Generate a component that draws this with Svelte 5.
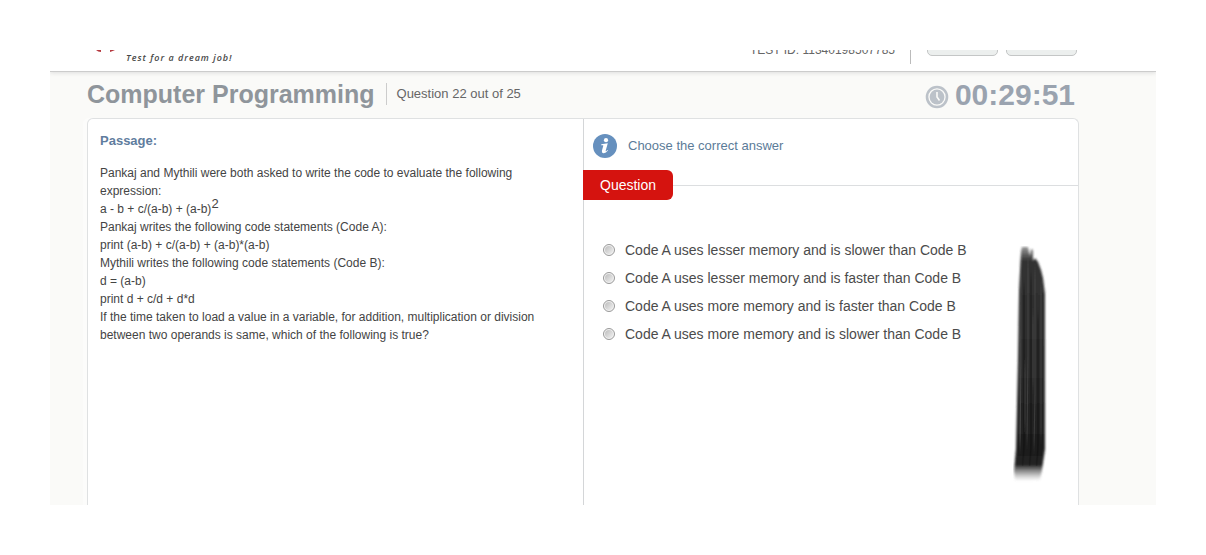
<script>
  const passage = [
    'Pankaj and Mythili were both asked to write the code to evaluate the following expression:',
    { base: 'a - b + c/(a-b) + (a-b)', power: '2' },
    'Pankaj writes the following code statements (Code A):',
    'print (a-b) + c/(a-b) + (a-b)*(a-b)',
    'Mythili writes the following code statements (Code B):',
    'd = (a-b)',
    'print d + c/d + d*d',
    'If the time taken to load a value in a variable, for addition, multiplication or division between two operands is same, which of the following is true?'
  ];
  const options = [
    'Code A uses lesser memory and is slower than Code B',
    'Code A uses lesser memory and is faster than Code B',
    'Code A uses more memory and is faster than Code B',
    'Code A uses more memory and is slower than Code B'
  ];
  let chosen = $state('');
</script>

<div class="page">
  <header>
    <div class="brand">
      <svg class="logo" width="22" height="4" viewBox="0 0 22 4" aria-hidden="true">
        <path d="M2 0H7V2Q4 2 2 0ZM16 0H21Q19 1 16 2Z" fill="#b5393f" />
      </svg>
      <span class="slogan">Test for a dream job!</span>
    </div>
    <div class="account">
      <span class="test-id">TEST ID: 11340198507785</span>
      <span class="rule"></span>
      <button type="button" aria-label="Help"></button>
      <button type="button" aria-label="Finish test"></button>
    </div>
  </header>

  <main>
    <div class="title">
      <h1>Computer Programming</h1>
      <p class="progress">Question 22 out of 25</p>
      <div class="timer">
        <svg width="24" height="24" viewBox="0 0 24 24" aria-hidden="true">
          <circle cx="12" cy="12" r="10" fill="none" stroke="#bcc2c9" stroke-width="2.6" />
          <circle cx="12" cy="12" r="7.4" fill="#bcc2c9" />
          <path d="M12 7V12L14.5 15.5" fill="none" stroke="#fafaf8" stroke-width="1.6" />
        </svg>
        <span>00:29:51</span>
      </div>
    </div>

    <div class="card">
      <section class="passage">
        <h2>Passage:</h2>
        {#each passage as line}
          {#if line.base}
            <p>{line.base}<sup>{line.power}</sup></p>
          {:else}
            <p>{line}</p>
          {/if}
        {/each}
      </section>

      <section class="answers">
        <div class="hint">
          <svg width="24" height="24" viewBox="0 0 24 24" aria-hidden="true">
            <circle cx="12" cy="12" r="12" fill="#6690be" />
            <circle cx="13" cy="6.2" r="2.1" fill="#fff" />
            <path d="M8.3 10.2L14.8 9.3L12.8 16.3Q12.4 17.6 13.2 17.2L14.5 16L15 16.6Q12.8 19.4 10.4 19.2Q8.4 19 8.9 16.8L10.3 11.8Q10.5 11.2 9.8 11.2H8.2Z" fill="#fff" />
          </svg>
          <span>Choose the correct answer</span>
        </div>
        <div class="tab-row"><h2>Question</h2></div>
        <div class="options" role="radiogroup" aria-label="Question">
          {#each options as option}
            <label>
              <input type="radio" name="answer" value={option} bind:group={chosen} />
              <span>{option}</span>
            </label>
          {/each}
        </div>
      </section>

      <svg class="brush" width="36" height="240" viewBox="0 0 36 240" aria-hidden="true">
        <defs>
          <linearGradient id="ink" x1="0" y1="0" x2="0" y2="1">
            <stop offset="0" stop-color="#333" stop-opacity=".5" />
            <stop offset=".06" stop-color="#323232" />
            <stop offset=".5" stop-color="#2b2b2b" />
            <stop offset=".87" stop-color="#1d1d1d" />
            <stop offset=".93" stop-color="#242424" />
            <stop offset="1" stop-color="#777" stop-opacity="0" />
          </linearGradient>
          <filter id="edge"><feGaussianBlur stdDeviation="0.8 1" /></filter>
          <filter id="bristle" filterUnits="userSpaceOnUse" x="0" y="0" width="36" height="240"><feGaussianBlur stdDeviation="0.6 6" /></filter>
          <clipPath id="stroke"><path d="M8 10L10 6H20L27 24L31 50V203L28 220H4L5 203V112L7 45Z" /></clipPath>
        </defs>
        <path d="M8 5L9 1L15 1L16 6L17 10L18 3L20 4V15L22 12L25 16L28 24L30 32L32 48V203L31 210L29 224L27 234L18 235H2L1 225L3 203L5 112L6 45Z" fill="url(#ink)" filter="url(#edge)" />
        <g clip-path="url(#stroke)">
          <g fill="none" filter="url(#bristle)">
            <path d="M8 12V120L7 200M15 14V110L14 195M22 25V150L21 200M28 40V190" stroke="#555" opacity=".55" />
            <path d="M11 40V205L9 220M18 30V205L16 222M25 70V205L23 222" stroke="#141414" opacity=".45" />
            <path d="M7 90V195M12 120V180M20 70V140" stroke="#666" opacity=".4" />
          </g>
        </g>
      </svg>
    </div>
  </main>
</div>

<style>
  :global(body) {
    margin: 0;
    background: #fff;
    font-family: "Liberation Sans", Arial, sans-serif;
  }
  .page {
    box-sizing: border-box;
    min-height: calc(100vh - 100px);
    margin: 50px;
    display: flex;
    flex-direction: column;
    background: #fafaf8;
    overflow: hidden;
  }
  header {
    box-sizing: border-box;
    height: 22px;
    flex: none;
    display: flex;
    justify-content: space-between;
    padding: 0 79px 0 44px;
    background: #fff;
    border-bottom: 1px solid #ccc;
    box-shadow: 0 1px 4px #ddd;
  }
  .brand { display: flex; gap: 10px; }
  .slogan {
    font: italic 600 9px/15px "Open Sans", sans-serif;
    letter-spacing: 1px;
    color: #484848;
  }
  .account { display: flex; align-items: flex-end; }
  .test-id {
    font-size: 12px;
    line-height: 16px;
    margin: 0 15px 13px 0;
    color: #666;
  }
  .rule { width: 1px; height: 30px; margin: 0 16px 7px 0; background: #bbb; }
  button {
    width: 71px;
    height: 28px;
    margin: 0 0 15px;
    padding: 0;
    border: 1px solid #c4c6c6;
    border-radius: 5px;
    background: #ecefee;
  }
  button + button { margin-left: 8px; }
  main {
    flex: 1;
    display: flex;
    flex-direction: column;
    padding: 0 77px 0 37px;
  }
  .title {
    display: flex;
    align-items: center;
    height: 46px;
    padding-right: 4px;
  }
  h1 {
    margin: 0;
    padding-bottom: 2px;
    font-size: 25px;
    line-height: 30px;
    color: #8f959b;
  }
  .progress {
    margin: 0 0 2px 11px;
    padding-left: 10px;
    border-left: 1px solid #ccc;
    font-size: 13px;
    line-height: 22px;
    color: #666;
  }
  .timer {
    display: flex;
    align-items: center;
    gap: 6px;
    margin-left: auto;
    font-size: 30px;
    font-weight: 700;
    line-height: 34px;
    color: #9aa3af;
  }
  .timer svg { margin-top: 4px; }
  .card {
    position: relative;
    flex: 1;
    display: grid;
    grid-template-columns: 1fr 1fr;
    background: #fff;
    border: 1px solid #dfe1e2;
    border-bottom: 0;
    border-radius: 6px 6px 0 0;
    box-shadow: -4px 0 0 #fcfcfb;
  }
  .passage { padding: 12px 36px 12px 12px; }
  .passage h2 {
    margin: 0 0 13px;
    font-size: 13px;
    line-height: 20px;
    color: #5f7d9e;
  }
  .passage p {
    margin: 0;
    font-size: 12px;
    line-height: 18px;
    color: #444;
  }
  sup { font-size: 13px; line-height: 0; }
  .answers { border-left: 1px solid #d4d6d8; }
  .hint {
    display: flex;
    align-items: center;
    gap: 11px;
    padding: 15px 9px 12px;
    font-size: 13px;
    line-height: 24px;
    color: #5b7b98;
  }
  .tab-row {
    display: flex;
    align-items: center;
    margin-left: -1px;
  }
  .tab-row::after { content: ""; flex: 1; height: 1px; background: #dcdee0; }
  .tab-row h2 {
    margin: 0;
    padding: 0 17px;
    border-radius: 0 6px 6px 0;
    background: #d5130f;
    color: #fff;
    font-size: 14px;
    font-weight: 400;
    line-height: 30px;
  }
  .options { padding: 36px 19px; }
  label {
    display: flex;
    align-items: center;
    gap: 10px;
    font-size: 14px;
    line-height: 28px;
    color: #4b4b4b;
  }
  input {
    appearance: none;
    box-sizing: border-box;
    flex: none;
    width: 12px;
    height: 12px;
    margin: 0;
    border: 1px solid #999;
    border-radius: 50%;
    background: linear-gradient(135deg, #bdbdbd, #f0f0f0) content-box, #f2f2f2;
    padding: 1px;
  }
  input:checked { background: radial-gradient(circle, #333 0 3px, #eee 4px); }
  .brush { position: absolute; top: 127px; right: 29px; pointer-events: none; }
</style>
